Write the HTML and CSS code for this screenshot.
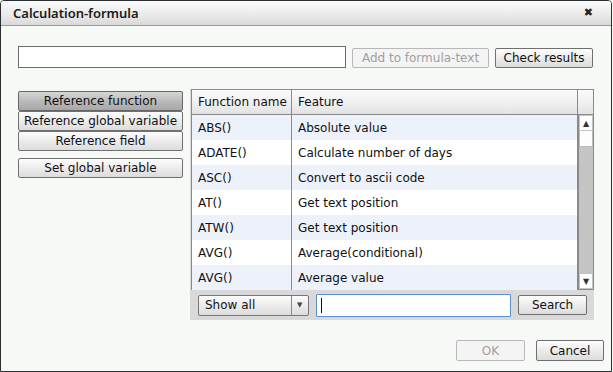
FILE: index.html
```html
<!DOCTYPE html>
<html lang="en">
<head>
    <meta charset="UTF-8" />
    <title>Calculation-formula</title>
    <link rel="stylesheet" href="styles.css">
</head>
<body>
<div class="dialog">
    <div class="titlebar">
        <span class="title">Calculation-formula</span>
        <span class="close">&#x2716;</span>
    </div>

    <div class="content">
        <div class="formula-row">
            <input type="text" class="formula-input" />
            <button class="btn btn-add" disabled>Add to formula-text</button>
            <button class="btn btn-check">Check results</button>
        </div>

        <div class="main-row">
            <div class="side">
                <div class="side-group">
                    <button class="btn side-btn active">Reference function</button>
                    <button class="btn side-btn">Reference global variable</button>
                    <button class="btn side-btn">Reference field</button>
                </div>
                <button class="btn side-btn">Set global variable</button>
            </div>

            <div class="panel">
                <div class="grid">
                    <div class="grid-head">
                        <div class="col-name">Function name</div>
                        <div class="col-feature">Feature</div>
                        <div class="col-scroll"></div>
                    </div>
                    <div class="grid-body">
                        <div class="rows">
                            <div class="row odd"><div class="col-name">ABS()</div><div class="col-feature">Absolute value</div></div>
                            <div class="row"><div class="col-name">ADATE()</div><div class="col-feature">Calculate number of days</div></div>
                            <div class="row odd"><div class="col-name">ASC()</div><div class="col-feature">Convert to ascii code</div></div>
                            <div class="row"><div class="col-name">AT()</div><div class="col-feature">Get text position</div></div>
                            <div class="row odd"><div class="col-name">ATW()</div><div class="col-feature">Get text position</div></div>
                            <div class="row"><div class="col-name">AVG()</div><div class="col-feature">Average(conditional)</div></div>
                            <div class="row odd"><div class="col-name">AVG()</div><div class="col-feature">Average value</div></div>
                        </div>
                        <div class="scrollbar">
                            <div class="arrow">&#9650;</div>
                            <div class="thumb"></div>
                            <div class="track"></div>
                            <div class="arrow">&#9660;</div>
                        </div>
                    </div>
                </div>
                <div class="toolbar">
                    <div class="select">
                        <span class="select-text">Show all</span>
                        <span class="select-arrow">&#9660;</span>
                    </div>
                    <div class="search-box"><span class="caret"></span></div>
                    <button class="btn btn-search">Search</button>
                </div>
            </div>
        </div>

        <div class="footer">
            <button class="btn btn-ok" disabled>OK</button>
            <button class="btn btn-cancel">Cancel</button>
        </div>
    </div>
</div>
</body>
</html>
```

FILE: styles.css
```css
body {
    margin: 0;
    font-family: 'DejaVu Sans', sans-serif;
    font-size: 12px;
    color: #111;
    background: #f7f9f7;
}

.dialog {
    width: 612px;
    height: 372px;
    box-sizing: border-box;
    border: 1px solid #2b2f2f;
    border-radius: 4px 4px 0 0;
    background: #f7f9f7;
    display: flex;
    flex-direction: column;
    overflow: hidden;
}

.titlebar {
    height: 24px;
    flex: none;
    display: flex;
    align-items: center;
    justify-content: space-between;
    padding: 0 18px 0 12px;
    background: linear-gradient(#fbfbfb, #e9e9e9 60%, #d9d9d9);
    border-bottom: 1px solid #9a9a9a;
}

.title {
    font-family: 'Noto Sans', sans-serif;
    font-size: 13px;
    font-weight: 600;
    color: #1a1a1a;
}

.close {
    font-size: 11px;
    font-weight: bold;
    color: #222;
    margin-top: -2px;
}

.content {
    flex: 1;
    padding: 20px 6px 10px 17px;
    display: flex;
    flex-direction: column;
}

.btn {
    font-family: 'DejaVu Sans', sans-serif;
    font-size: 12px;
    height: 20px;
    padding: 0;
    white-space: nowrap;
    border: 1px solid #707070;
    border-radius: 2px;
    background: linear-gradient(#fdfdfd, #ececec 50%, #dcdcdc);
    color: #111;
    cursor: pointer;
}

.btn:disabled {
    border-color: #b8b8b8;
    background: #f4f4f4;
    color: #a0a0a0;
}

.formula-row {
    display: flex;
    align-items: center;
    gap: 6px;
}

.formula-input {
    width: 328px;
    height: 22px;
    box-sizing: border-box;
    border: 1px solid #6c6c6c;
    background: #fff;
    margin: 0;
}

.btn-add {
    width: 137px;
    margin-top: 1px;
}

.btn-check {
    width: 98px;
    margin-top: 1px;
}

.main-row {
    display: flex;
    gap: 7px;
    margin-top: 21px;
}

.side {
    width: 165px;
    display: flex;
    flex-direction: column;
    gap: 7px;
    padding-top: 2px;
}

.side-group {
    display: flex;
    flex-direction: column;
}

.side-btn {
    width: 165px;
}

.side-btn.active {
    background: linear-gradient(#d6d6d6, #b8b8b8 55%, #a8a8a8);
    border-color: #666;
}

.panel {
    width: 404px;
    background: #d9d9d9;
    display: flex;
    flex-direction: column;
}

.grid {
    margin-left: 1px;
    width: 403px;
    box-sizing: border-box;
    border: 1px solid #8a8a8a;
    background: #fff;
}

.grid-head {
    display: flex;
    height: 24px;
    background: linear-gradient(#fbfbfb, #eeeeee 60%, #e2e2e2);
    border-bottom: 1px solid #8a8a8a;
}

.grid-head > div {
    display: flex;
    align-items: center;
}

.col-name {
    width: 100px;
    box-sizing: border-box;
    padding-left: 6px;
    border-right: 1px solid #8a8a8a;
}

.col-feature {
    width: 286px;
    box-sizing: border-box;
    padding-left: 6px;
    border-right: 1px solid #8a8a8a;
}

.col-scroll {
    flex: 1;
}

.grid-body {
    display: flex;
    height: 174px;
}

.rows {
    width: 386px;
}

.row {
    display: flex;
    height: 25px;
    background: #fff;
}

.row > div {
    display: flex;
    align-items: center;
}

.row.odd {
    background: #edf2fa;
}

.scrollbar {
    width: 15px;
    display: flex;
    flex-direction: column;
    border-left: 1px solid #8a8a8a;
    background: #c4c4c4;
}

.arrow {
    height: 16px;
    background: #fff;
    font-size: 8px;
    color: #333;
    display: flex;
    align-items: center;
    justify-content: center;
    box-sizing: border-box;
    border: 1px solid #c4c4c4;
}

.thumb {
    height: 15px;
    background: #fdfdfd;
    border: 1px solid #bbb;
    border-top: none;
}

.track {
    flex: 1;
}

.toolbar {
    height: 30px;
    display: flex;
    align-items: center;
    padding: 0 7px 0 8px;
    gap: 7px;
}

.select {
    width: 111px;
    height: 21px;
    box-sizing: border-box;
    display: flex;
    border: 1px solid #777;
    border-radius: 2px;
    background: linear-gradient(#fcfcfc, #ececec 50%, #dcdcdc);
}

.select-text {
    flex: 1;
    padding-left: 6px;
    display: flex;
    align-items: center;
    border-right: 1px solid #888;
}

.select-arrow {
    width: 16px;
    font-size: 7px;
    color: #444;
    display: flex;
    align-items: center;
    justify-content: center;
}

.search-box {
    width: 196px;
    height: 23px;
    box-sizing: border-box;
    border: 1px solid #5b8fcf;
    border-radius: 1px;
    box-shadow: 0 0 0 1px #c8ddf3;
    background: #fff;
    display: flex;
    align-items: center;
    padding-left: 4px;
}

.caret {
    width: 1px;
    height: 15px;
    background: #111;
}

.btn-search {
    width: 69px;
}

.footer {
    margin-top: auto;
    display: flex;
    justify-content: flex-end;
    gap: 11px;
    padding-right: 1px;
}

.btn-ok {
    width: 69px;
    height: 21px;
}

.btn-cancel {
    width: 68px;
    height: 21px;
}
```
